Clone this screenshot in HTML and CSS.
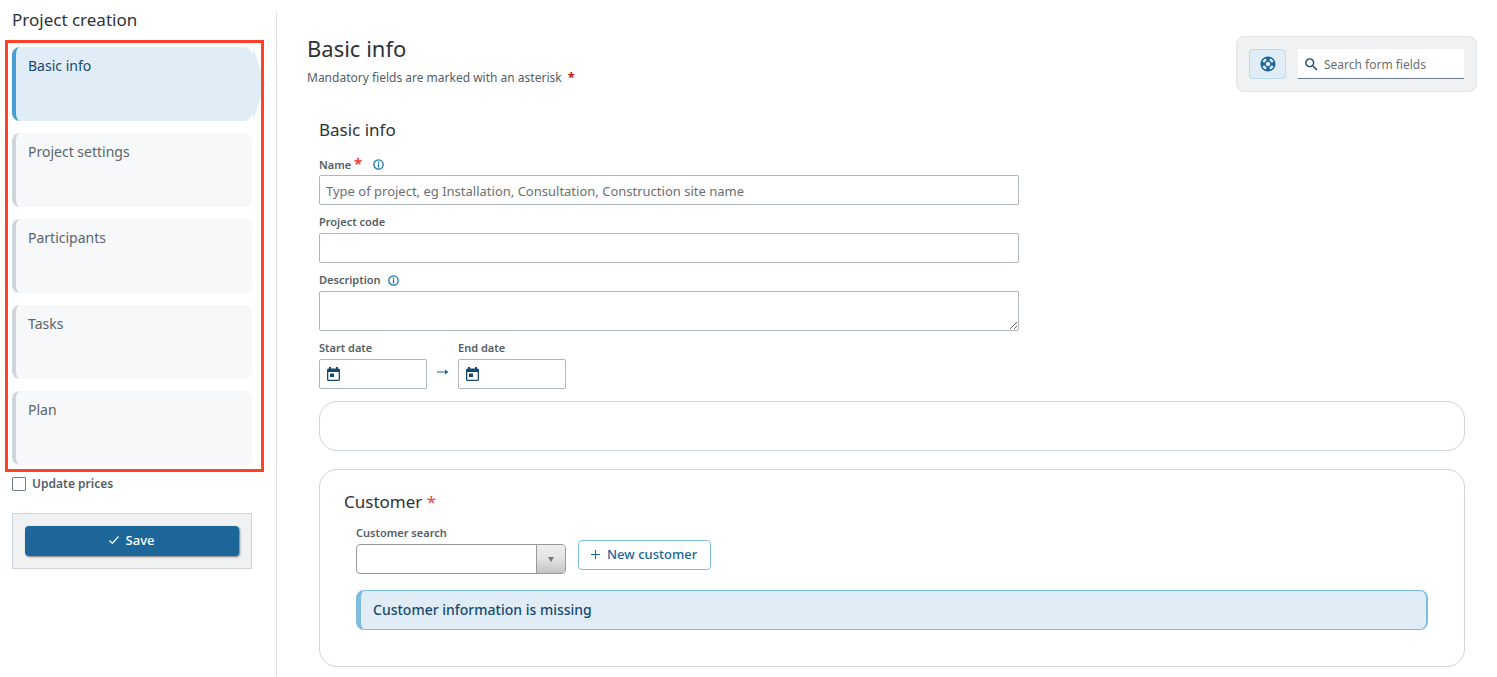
FILE: index.html
```html
<!DOCTYPE html>
<html lang="en">
<head>
  <meta charset="UTF-8">
  <meta name="viewport" content="width=device-width, initial-scale=1.0">
  <title>Project creation</title>
  <link rel="stylesheet" href="styles.css">
</head>
<body>
  <!-- Sidebar -->
  <aside class="sidebar">
    <h2 class="sidebar-title">Project creation</h2>
    <nav class="steps">
      <a class="step active" href="#basic-info">Basic info</a>
      <a class="step" href="#settings">Project settings</a>
      <a class="step" href="#participants">Participants</a>
      <a class="step" href="#tasks">Tasks</a>
      <a class="step" href="#plan">Plan</a>
    </nav>
    <div class="update-prices">
      <input type="checkbox" id="update-prices">
      <label for="update-prices">Update prices</label>
    </div>
    <div class="save-box">
      <button type="submit" class="save-button" form="project-form">
        <svg width="12" height="10" viewBox="0 0 12 10" fill="none" stroke="currentColor" stroke-width="1.2"><path d="M1.500 5.500 4.300 8.300 10.500 1.500"/></svg>
        Save
      </button>
    </div>
  </aside>

  <!-- Content -->
  <main class="content">
    <header class="page-header">
      <div>
        <h1>Basic info</h1>
        <p class="hint">Mandatory fields are marked with an asterisk <span class="asterisk dark">*</span></p>
      </div>
      <div class="toolbar">
        <button type="button" class="help-button" aria-label="Help">
          <svg width="18" height="18" viewBox="0 0 24 24" fill="currentColor"><path d="M12 2C6.480 2 2 6.480 2 12s4.480 10 10 10 10-4.480 10-10S17.520 2 12 2zm7.460 7.120-2.780 1.150c-.51-1.360-1.580-2.440-2.950-2.940l1.150-2.780c2.100.8 3.770 2.470 4.580 4.570zM12 15c-1.660 0-3-1.340-3-3s1.340-3 3-3 3 1.340 3 3-1.340 3-3 3zM9.130 4.540l1.170 2.780c-1.380.5-2.470 1.590-2.980 2.970L4.540 9.130c.81-2.110 2.480-3.780 4.590-4.590zM4.540 14.870l2.780-1.150c.51 1.380 1.590 2.460 2.970 2.960l-1.170 2.780c-2.100-.81-3.770-2.480-4.580-4.590zm10.340 4.590-1.150-2.780c1.370-.51 2.450-1.590 2.950-2.970l2.780 1.170c-.81 2.100-2.480 3.770-4.580 4.580z"/></svg>
        </button>
        <label class="search">
          <svg width="17" height="17" viewBox="0 0 24 24" fill="currentColor"><path d="M15.500 14h-.79l-.28-.27A6.470 6.470 0 0 0 16 9.500 6.500 6.500 0 1 0 9.500 16c1.610 0 3.090-.59 4.230-1.570l.27.28v.79l5 4.990L20.490 19l-4.990-5zm-6 0C7.010 14 5 11.990 5 9.500S7.010 5 9.500 5 14 7.010 14 9.500 11.990 14 9.500 14z"/></svg>
          <input type="search" placeholder="Search form fields" aria-label="Search form fields">
        </label>
      </div>
    </header>

    <form id="project-form" class="form">
      <section class="fields" id="basic-info">
        <h2>Basic info</h2>
        <div class="field">
          <div class="label-row">
            <label for="name">Name <span class="asterisk">*</span></label>
            <svg class="info wide" width="11" height="11" viewBox="0 0 11 11" fill="none" stroke="currentColor" stroke-width="1.3"><circle cx="5.500" cy="5.500" r="4.700"/><path d="M5.500 4.500V8.400M5.500 2.600V3.900"/></svg>
          </div>
          <input type="text" id="name" placeholder="Type of project, eg Installation, Consultation, Construction site name">
        </div>
        <div class="field">
          <div class="label-row"><label for="code">Project code</label></div>
          <input type="text" id="code">
        </div>
        <div class="field">
          <div class="label-row">
            <label for="description">Description</label>
            <svg class="info" width="11" height="11" viewBox="0 0 11 11" fill="none" stroke="currentColor" stroke-width="1.3"><circle cx="5.500" cy="5.500" r="4.700"/><path d="M5.500 4.500V8.400M5.500 2.600V3.900"/></svg>
          </div>
          <textarea id="description"></textarea>
        </div>
        <div class="dates">
          <div class="field">
            <div class="label-row"><label for="start-date">Start date</label></div>
            <div class="date-input">
              <svg width="13" height="15" viewBox="0 0 13 15" fill="currentColor"><path fill-rule="evenodd" d="M2 0h2v1.500h5V0h2v1.500h.5A1.500 1.500 0 0 1 13 3v9.500a1.500 1.500 0 0 1-1.500 1.500h-10A1.500 1.500 0 0 1 0 12.500V3a1.500 1.500 0 0 1 1.500-1.500H2zM1.300 5v7.700h10.400V5z"/><path d="M3 6.500h4v3.500H3z"/></svg>
              <input type="text" id="start-date">
            </div>
          </div>
          <svg class="arrow" width="13" height="6" viewBox="0 0 13 6" fill="currentColor"><path d="M1 2.400h8V.5L12.500 3 9 5.500V3.600H1z"/></svg>
          <div class="field">
            <div class="label-row"><label for="end-date">End date</label></div>
            <div class="date-input">
              <svg width="13" height="15" viewBox="0 0 13 15" fill="currentColor"><path fill-rule="evenodd" d="M2 0h2v1.500h5V0h2v1.500h.5A1.500 1.500 0 0 1 13 3v9.500a1.500 1.500 0 0 1-1.500 1.500h-10A1.500 1.500 0 0 1 0 12.500V3a1.500 1.500 0 0 1 1.500-1.500H2zM1.300 5v7.700h10.400V5z"/><path d="M3 6.500h4v3.500H3z"/></svg>
              <input type="text" id="end-date">
            </div>
          </div>
        </div>
      </section>

      <section class="card empty"></section>

      <section class="card customer">
        <h2>Customer <span class="required">*</span></h2>
        <div class="customer-body">
          <div class="customer-row">
            <div class="field">
              <div class="label-row"><label for="customer">Customer search</label></div>
              <div class="combo">
                <select id="customer"><option></option></select>
                <span class="combo-arrow"></span>
              </div>
            </div>
            <button type="button" class="new-button">
              <svg width="9" height="9" viewBox="0 0 9 9" stroke="currentColor"><path d="M4.500 0v9M0 4.500h9"/></svg>
              New customer
            </button>
          </div>
          <p class="notice">Customer information is missing</p>
        </div>
      </section>
    </form>
  </main>
</body>
</html>
```
FILE: styles.css
```css
* {
  box-sizing: border-box;
}

body {
  margin: 0;
  min-height: 100vh;
  display: flex;
  padding-top: 12px;
  font-family: "Noto Sans", sans-serif;
  font-size: 14px;
  color: #555e67;
  background: #fff;
}

h1, h2, p {
  margin: 0;
  font-weight: 400;
}

h1, h2 {
  color: #2d3237;
}

h1 {
  font-size: 22px;
  line-height: 24px;
}

h2 {
  font-size: 17px;
  line-height: 20px;
}

input, textarea, select, button {
  font-family: inherit;
  font-size: 13px;
  color: inherit;
}

svg {
  flex: none;
}

/* Sidebar */
.sidebar {
  width: 277px;
  flex: none;
  padding: 0 24px 0 12px;
  border-right: 1px solid #dee2e6;
}

.sidebar-title {
  line-height: 16px;
  margin-bottom: 19px;
}

.steps {
  position: relative;
  display: flex;
  flex-direction: column;
  gap: 12px;
}

/* red frame round the steps */
.steps::after {
  content: "";
  position: absolute;
  inset: -7px -12px -7px -7px;
  border: 3px solid #ff4128;
  pointer-events: none;
}

.step {
  position: relative;
  height: 74px;
  padding: 9px 12px;
  border-left: 4px solid #ced4da;
  border-radius: 8px;
  background: #f6f8fa;
  color: #5b636b;
  font-size: 14px;
  line-height: 20px;
  text-decoration: none;
}

.step.active {
  border-color: #459fd3;
  background: #e0edf7;
  color: #17496f;
}

.step.active::after {
  content: "";
  position: absolute;
  top: 0;
  bottom: 0;
  left: 100%;
  width: 14px;
  margin-left: -1px;
  background: #e0edf7;
  clip-path: polygon(0 8%, 16% 8%, 16% 0, 100% 50%, 16% 100%, 16% 92%, 0 92%);
}

.update-prices {
  display: flex;
  align-items: center;
  gap: 6px;
  margin-top: 10px;
  font-size: 12px;
  font-weight: 600;
  line-height: 17px;
}

.update-prices input {
  appearance: none;
  width: 14px;
  height: 14px;
  margin: 0;
  border: 1px solid #6f7b88;
  border-radius: 1px;
  background: #fff;
}

.update-prices input:checked {
  background: #1c6699;
}

.save-box {
  margin-top: 21px;
  padding: 12px;
  border: 1px solid #ced4da;
  background: #f0f1f3;
}

.save-button {
  display: flex;
  align-items: center;
  justify-content: center;
  gap: 6px;
  width: 100%;
  height: 30px;
  padding: 0 2px 2px 0;
  border: none;
  border-radius: 4px;
  background: #1c6699;
  box-shadow: 1px 1px 2px rgba(0, 0, 0, 0.5);
  color: #fff;
  font-weight: 500;
}

/* Content */
.content {
  flex: 1;
  min-width: 0;
  padding: 24px 20px 10px 30px;
}

.page-header {
  display: flex;
  justify-content: space-between;
  align-items: flex-start;
  margin-bottom: 28px;
}

.hint {
  margin-top: 10px;
  font-size: 12px;
  line-height: 16px;
}

.asterisk {
  font-size: 15px;
  font-weight: 700;
  line-height: 12px;
  color: #f03e3e;
}

.asterisk.dark {
  margin-left: 3px;
  font-size: 13px;
  color: #b71c1c;
}

.toolbar {
  display: flex;
  gap: 12px;
  padding: 12px;
  border: 1px solid #e2e5e8;
  border-radius: 8px;
  background: #f0f1f3;
}

.help-button {
  display: flex;
  align-items: center;
  justify-content: center;
  width: 37px;
  height: 30px;
  padding: 0;
  border: 1px solid #b9dcf0;
  border-radius: 4px;
  background: #e0edf7;
  color: #1c6699;
}

.search {
  display: flex;
  align-items: center;
  gap: 4px;
  width: 166px;
  height: 30px;
  padding: 2px 5px 0;
  border-bottom: 1px solid #6f7b88;
  background: #fff;
  color: #17496f;
}

.search input {
  flex: 1;
  min-width: 0;
  padding: 0;
  border: none;
  outline: none;
  background: none;
  font-size: 12px;
}

::placeholder {
  color: #6c6f72;
}

/* Form */
.form {
  padding: 0 12px;
}

.fields {
  display: flex;
  flex-direction: column;
  gap: 11px;
  max-width: 700px;
  margin-bottom: 12px;
}

.fields h2 {
  margin-bottom: 6px;
}

.label-row {
  display: flex;
  align-items: center;
  gap: 7px;
  height: 14px;
  margin-bottom: 4px;
  font-size: 11px;
  font-weight: 600;
  line-height: 14px;
}

.fields .field + .field {
  margin-top: -1px;
}

.info {
  color: #1976ab;
}

.info.wide {
  margin-left: 4px;
}

.field > input,
.field > textarea,
.date-input {
  display: block;
  width: 100%;
  height: 30px;
  padding: 2px 6px 0;
  border: 1px solid #adb5bd;
  border-radius: 2px;
  background: #fff;
}

.field > textarea {
  height: 40px;
  resize: vertical;
}

.dates {
  display: flex;
  align-items: flex-end;
  gap: 9px;
  margin-top: -1px;
}

.date-input {
  display: flex;
  align-items: center;
  gap: 6px;
  width: 108px;
  padding: 0 7px;
  color: #17496f;
}

.date-input input {
  flex: 1;
  min-width: 0;
  padding: 0;
  border: none;
  outline: none;
}

.arrow {
  margin-bottom: 14px;
  color: #1c6699;
}

.card {
  border: 1px solid #ced4da;
  border-radius: 18px;
}

.card.empty {
  height: 50px;
  margin-bottom: 18px;
}

.card.customer {
  padding: 22px 24px 36px;
}

.required {
  color: #f03e3e;
}

.customer-body {
  padding: 14px 12px 0;
}

.customer-row {
  display: flex;
  align-items: flex-end;
  gap: 12px;
}

.combo {
  display: flex;
  position: relative;
  width: 210px;
  height: 30px;
}

.combo select {
  appearance: none;
  width: 100%;
  padding: 0 36px 0 6px;
  border: 1px solid #999;
  border-radius: 4px;
  background: #fff;
}

.combo-arrow {
  position: absolute;
  top: 1px;
  right: 1px;
  bottom: 1px;
  display: flex;
  align-items: center;
  justify-content: center;
  width: 29px;
  border-left: 1px solid #999;
  border-radius: 0 3px 3px 0;
  background: linear-gradient(#eee 0%, #e4e4e4 45%, #c4c4c4 100%);
  pointer-events: none;
}

.combo-arrow::after {
  content: "";
  border: 3px solid transparent;
  border-top: 5px solid #777;
  border-bottom: none;
}

.new-button {
  display: flex;
  align-items: center;
  gap: 7px;
  height: 30px;
  margin-bottom: 4px;
  padding: 0 13px 2px 12px;
  border: 1px solid #80bce0;
  border-radius: 4px;
  background: #fff;
  color: #1c6699;
  font-weight: 500;
}

.notice {
  margin-top: 16px;
  padding: 9px 12px;
  border: 1px solid #80bce0;
  border-left-width: 5px;
  border-right-width: 2px;
  border-radius: 8px;
  background: #e0edf7;
  color: #17496f;
  font-size: 14px;
  font-weight: 500;
  line-height: 20px;
}
```
